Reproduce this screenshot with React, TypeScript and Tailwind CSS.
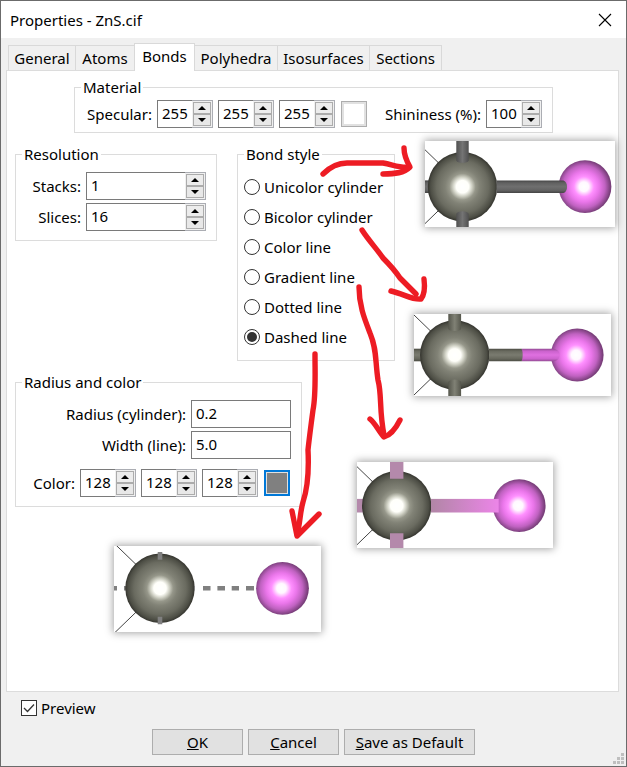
import React, { useState } from 'react';

const tabs = [
  { name: 'General', width: 'w-[67px]' },
  { name: 'Atoms', width: 'w-[59px]' },
  { name: 'Bonds', width: 'w-[61px]' },
  { name: 'Polyhedra', width: 'w-[82px]' },
  { name: 'Isosurfaces', width: 'w-[92px]' },
  { name: 'Sections', width: 'w-[73px]' }
];

const bondStyles = [
  'Unicolor cylinder',
  'Bicolor cylinder',
  'Color line',
  'Gradient line',
  'Dotted line',
  'Dashed line'
];

const arrows = [
  'M323 174 C329 168 337 163 347 163 L383 163 C394 165 400 168 409 167',
  'M404 148 C404 155 406 160 410 167 C404 173 395 174 383 174',
  'M362 230 C369 241 377 249 383 258 C390 265 396 272 400 278 L416 294',
  'M424 279 C425 287 425 294 421 299 C412 300 404 294 391 291',
  'M359 287 C359 306 365 320 370 333 C377 350 375 360 378 380 C382 395 379 410 384 435',
  'M370 419 C376 424 379 432 384 437 C391 435 396 428 400 420',
  'M315 354 C315 376 316 395 313 410 C311 425 309 440 308 450 C309 470 307 490 303 502 C300 512 300 525 297 534',
  'M292 511 L297 536 L319 514'
];

type GroupProps = { title: string; className?: string; children: React.ReactNode };

const Group = ({ title, className = '', children }: GroupProps) => (
  <fieldset className={`border border-[#dcdcdc] ${className}`}>
    <legend className="ml-1.5 px-0.5 leading-[21px]">{title}</legend>
    {children}
  </fieldset>
);

type SpinnerProps = { id?: string; label?: string; value: number; className?: string };

const Spinner = ({ id, label, value, className = 'w-14' }: SpinnerProps) => {
  const [current, setCurrent] = useState(value);
  return (
    <div className={`flex h-7 shrink-0 ${className}`}>
      <input
        id={id}
        aria-label={label}
        inputMode="numeric"
        value={current}
        onChange={(e) => setCurrent(Number(e.target.value) || 0)}
        className="min-w-0 flex-1 border border-r-0 border-[#7a7a7a] bg-white pb-0.5 pl-1 outline-none"
      />
      <div className="flex w-[21px] shrink-0 flex-col border border-l-0 border-[#abadb3] bg-[#f0f0f0] p-px">
        <button
          type="button"
          aria-label="Increase"
          onClick={() => setCurrent(current + 1)}
          className="flex flex-1 items-center justify-center border border-[#acacac] bg-[#ececec]"
        >
          <svg width="8" height="4" viewBox="0 0 8 4"><path d="M4 0 L8 4 H0 Z" /></svg>
        </button>
        <button
          type="button"
          aria-label="Decrease"
          onClick={() => setCurrent(current - 1)}
          className="flex flex-1 items-center justify-center border border-[#acacac] bg-[#e8e8e8]"
        >
          <svg width="8" height="4" viewBox="0 0 8 4"><path d="M0 0 H8 L4 4 Z" /></svg>
        </button>
      </div>
    </div>
  );
};

// Shared gradients for the atoms and bonds of every preview
const Gradients = () => (
  <defs>
    <radialGradient id="zinc">
      <stop offset="0" stopColor="#fff" />
      <stop offset="0.18" stopColor="#fffffa" />
      <stop offset="0.27" stopColor="#d2d3c7" />
      <stop offset="0.38" stopColor="#96978a" />
      <stop offset="0.5" stopColor="#818276" />
      <stop offset="0.75" stopColor="#6a6b60" />
      <stop offset="0.92" stopColor="#4d4e45" />
      <stop offset="1" stopColor="#34342e" />
    </radialGradient>
    <radialGradient id="sulfur" cx="0.48">
      <stop offset="0" stopColor="#fff" />
      <stop offset="0.18" stopColor="#fff8ff" />
      <stop offset="0.38" stopColor="#ff90ff" />
      <stop offset="0.58" stopColor="#ea76ea" />
      <stop offset="0.8" stopColor="#c062c1" />
      <stop offset="1" stopColor="#7a3f7b" />
    </radialGradient>
    <linearGradient id="rod" x2="0" y2="1">
      <stop offset="0" stopColor="#444" />
      <stop offset="0.2" stopColor="#616161" />
      <stop offset="0.5" stopColor="#6f6f6f" />
      <stop offset="0.8" stopColor="#616161" />
      <stop offset="1" stopColor="#444" />
    </linearGradient>
    <linearGradient id="rodUp">
      <stop offset="0" stopColor="#505050" />
      <stop offset="0.5" stopColor="#747474" />
      <stop offset="1" stopColor="#505050" />
    </linearGradient>
    <linearGradient id="zincRod" x2="0" y2="1">
      <stop offset="0" stopColor="#4b4c43" />
      <stop offset="0.2" stopColor="#6a6b60" />
      <stop offset="0.5" stopColor="#7a7b70" />
      <stop offset="0.8" stopColor="#66675c" />
      <stop offset="1" stopColor="#4b4c43" />
    </linearGradient>
    <linearGradient id="zincRodUp">
      <stop offset="0" stopColor="#55564c" />
      <stop offset="0.5" stopColor="#808175" />
      <stop offset="1" stopColor="#55564c" />
    </linearGradient>
    <linearGradient id="sulfurRod" x2="0" y2="1">
      <stop offset="0" stopColor="#914a92" />
      <stop offset="0.2" stopColor="#cb62cd" />
      <stop offset="0.5" stopColor="#df70e0" />
      <stop offset="0.8" stopColor="#cb62cd" />
      <stop offset="1" stopColor="#914a92" />
    </linearGradient>
    <linearGradient id="blend">
      <stop offset="0" stopColor="#b186a6" />
      <stop offset="1" stopColor="#ec85e8" />
    </linearGradient>
  </defs>
);

type PreviewProps = { title: string; className: string; viewBox: string; children: React.ReactNode };

// The zinc atom sits at the origin of each view box
const Preview = ({ title, className, viewBox, children }: PreviewProps) => (
  <svg
    role="img"
    aria-label={title}
    viewBox={viewBox}
    className={`absolute bg-white shadow-[0_0_8px_1px_rgba(0,0,0,0.36)] ${className}`}
  >
    <path d="M-50 -49 L-20 -20 M-50 49 L-20 20" stroke="#444" strokeWidth="1" />
    {children}
  </svg>
);

const Atoms = () => (
  <>
    <circle r="34.7" fill="url(#zinc)" />
    <circle cx="122.5" r="26.4" fill="url(#sulfur)" />
  </>
);

const Illustrations = () => (
  <>
    <Preview title="Unicolor cylinder preview" className="top-[70px] left-[418px] h-[86px] w-[190px]" viewBox="-37.5 -45.7 190 86">
      <rect x="-50" y="-6.3" width="20" height="12.6" fill="url(#rod)" />
      <Atoms />
      <path d="M34 -6.3 H101 Q104.5 -5 104.5 0 T101 6.3 H34 Z" fill="url(#rod)" />
      <path d="M-6.2 -50 H6.2 V-26 Q5 -24 0 -24 T-6.2 -26 Z M-6.2 50 H6.2 V27 Q5 24.5 0 24.5 T-6.2 27 Z" fill="url(#rodUp)" />
    </Preview>
    <Preview title="Bicolor cylinder preview" className="top-[243px] left-[407px] h-[82px] w-[197px]" viewBox="-40.7 -41 197 82">
      <rect x="-50" y="-6.3" width="20" height="12.6" fill="url(#zincRod)" />
      <Atoms />
      <path d="M67 -6.3 H99 Q105 -5 105 0 T99 6.3 H67 Z" fill="url(#sulfurRod)" />
      <path d="M34.3 -6.3 H67 Q69 0 67 6.3 H34.3 Z" fill="url(#zincRod)" />
      <path d="M-6.4 -50 H6.4 V-26 Q5 -24 0 -24 T-6.4 -26 Z M-6.4 50 H6.4 V27 Q5 24.5 0 24.5 T-6.4 27 Z" fill="url(#zincRodUp)" />
    </Preview>
    <Preview title="Gradient line preview" className="top-[391px] left-[350px] h-[86px] w-[196px]" viewBox="-39.7 -43.7 196 86">
      <rect x="-50" y="-6.8" width="20" height="13.6" fill="#b489ab" />
      <Atoms />
      <rect x="34.3" y="-6.8" width="67.7" height="13.6" fill="url(#blend)" />
      <path d="M-6.7 -50 H6.7 V-27 H-6.7 Z M-6.7 50 H6.7 V27.6 H-6.7 Z" fill="#b489ab" />
    </Preview>
    <Preview title="Dashed line preview" className="top-[475px] left-[107px] h-[86px] w-[207px]" viewBox="-46 -42.3 207 86">
      <path d="M-46 0 H-43 M-36 0 H-30" stroke="#808080" strokeWidth="4.6" />
      <Atoms />
      <path d="M34 0 H35 M43 0 H50.5 M57.4 0 H65 M71.7 0 H79 M86 0 H94" stroke="#808080" strokeWidth="4.6" />
      <path d="M0 -36.3 V-28.5 M0 28.5 V36" stroke="#808080" strokeWidth="4.6" />
    </Preview>
    <svg className="pointer-events-none absolute top-0 left-0 h-[620px] w-[611px]" viewBox="7 71 611 620" aria-hidden="true">
      <Gradients />
      <g fill="none" stroke="#ed1c24" strokeWidth="5.4" strokeLinecap="round" strokeLinejoin="round">
        {arrows.map((d) => (
          <path key={d} d={d} />
        ))}
      </g>
    </svg>
  </>
);

const App = () => {
  const [style, setStyle] = useState('Dashed line');

  return (
    <div className="flex min-h-screen flex-col border border-[#6b6b6b] bg-[#f0f0f0] font-['Noto_Sans','Open_Sans',sans-serif] text-[15px] leading-5 whitespace-nowrap text-black">
      <header className="flex h-[37px] shrink-0 items-center justify-between bg-white pr-3.5 pl-[9px]">
        <h1>Properties - ZnS.cif</h1>
        <button type="button" aria-label="Close">
          <svg width="14" height="14" viewBox="0 0 14 14" stroke="#000" strokeWidth="1.1">
            <path d="M1 1 L13 13 M13 1 L1 13" />
          </svg>
        </button>
      </header>

      <nav className="flex items-end px-[7px] pt-[5px]" role="tablist">
        {tabs.map((tab) => (
          <button
            key={tab.name}
            type="button"
            role="tab"
            aria-selected={tab.name === 'Bonds'}
            className={`flex items-center justify-center border border-b-0 border-[#d9d9d9] ${tab.width} ${
              tab.name === 'Bonds'
                ? 'relative z-10 -mb-px h-7 bg-white pb-1'
                : 'h-[25px] border-r-0 pb-px last:border-r nth-4:border-l-0'
            }`}
          >
            {tab.name}
          </button>
        ))}
      </nav>

      <main className="relative mr-[7px] ml-[5px] flex flex-1 flex-col items-start gap-[11px] border border-[#dcdcdc] bg-white pt-1.5 pr-1.5 pl-2">
        <Group title="Material" className="mx-auto w-[479px]">
          <div className="flex items-center justify-end gap-[5px] pt-0.5 pr-2.5 pb-1">
            <label htmlFor="specular">Specular:</label>
            <Spinner id="specular" value={255} />
            <Spinner label="Specular green" value={255} />
            <Spinner label="Specular blue" value={255} />
            <button type="button" aria-label="Specular color" className="ml-px size-[26px] shrink-0 border border-[#adadad] bg-white">
              <span className="block size-full border-2 border-[#e1e1e1]" />
            </button>
            <label htmlFor="shininess" className="w-[109px] text-right">Shininess (%):</label>
            <Spinner id="shininess" value={100} />
          </div>
        </Group>

        <div className="flex items-start gap-5">
          <Group title="Resolution" className="w-[202px]">
            <div className="grid grid-cols-[auto_120px] items-center justify-end gap-x-[5px] gap-y-[3px] pt-[7px] pr-2.5 pb-[9px]">
              <label htmlFor="stacks" className="text-right">Stacks:</label>
              <Spinner id="stacks" value={1} className="w-full" />
              <label htmlFor="slices" className="text-right">Slices:</label>
              <Spinner id="slices" value={16} className="w-full" />
            </div>
          </Group>

          <Group title="Bond style" className="w-[158px]">
            <div className="flex flex-col pt-[7px] pb-2 pl-1.5">
              {bondStyles.map((name) => (
                <label key={name} className="flex h-[30px] items-center gap-1">
                  <input
                    type="radio"
                    name="bond-style"
                    checked={style === name}
                    onChange={() => setStyle(name)}
                    className="grid size-4 shrink-0 appearance-none place-items-center rounded-full border border-[#333] bg-white checked:before:size-2.5 checked:before:rounded-full checked:before:bg-[#333] checked:before:content-['']"
                  />
                  {name}
                </label>
              ))}
            </div>
          </Group>
        </div>

        <Group title="Radius and color" className="w-[287px]">
          <div className="flex flex-col gap-2.5 pt-[7px] pr-2.5 pb-[9px]">
            <div className="grid grid-cols-[auto_100px] items-center justify-end gap-x-[5px] gap-y-[3px]">
              <label htmlFor="radius" className="text-right">Radius (cylinder):</label>
              <input id="radius" defaultValue="0.2" className="h-7 w-full border border-[#7a7a7a] bg-white px-1 pb-0.5" />
              <label htmlFor="width" className="text-right">Width (line):</label>
              <input id="width" defaultValue="5.0" className="h-7 w-full border border-[#7a7a7a] bg-white px-1 pb-0.5" />
            </div>
            <div className="flex items-center justify-end gap-[5px] pr-px">
              <label htmlFor="color">Color:</label>
              <Spinner id="color" value={128} />
              <Spinner label="Color green" value={128} />
              <Spinner label="Color blue" value={128} />
              <button type="button" aria-label="Bond color" className="ml-px size-[26px] shrink-0 border-2 border-[#0078d7] bg-[#808080]">
                <span className="block size-full border border-[#e1e1e1]" />
              </button>
            </div>
          </div>
        </Group>

        <Illustrations />
      </main>

      <footer className="relative flex flex-col gap-[9px] px-5 pt-1 pb-[11px]">
        <label className="flex h-6 items-center gap-1 self-start">
          <span className="grid size-4">
            <input type="checkbox" defaultChecked className="peer size-4 appearance-none border border-[#333] bg-white [grid-area:1/1]" />
            <svg viewBox="0 0 16 16" className="pointer-events-none invisible size-4 [grid-area:1/1] peer-checked:visible" fill="none" stroke="#333" strokeWidth="1.3">
              <path d="M3 8 L6.5 11.5 L13 4.5" />
            </svg>
          </span>
          Preview
        </label>
        <div className="flex h-[26px] justify-center gap-[5px]">
          <button type="button" className="w-[91px] border border-[#adadad] bg-[#e1e1e1]"><u>O</u>K</button>
          <button type="button" className="w-[91px] border border-[#adadad] bg-[#e1e1e1]"><u>C</u>ancel</button>
          <button type="button" className="w-[131px] border border-[#adadad] bg-[#e1e1e1]"><u>S</u>ave as Default</button>
        </div>
        <svg className="absolute right-0.5 bottom-0.5" width="11" height="11" viewBox="0 0 11 11" fill="#bfbfbf" aria-hidden="true">
          <path d="M8 0h3v3h-3z M4 4h3v3h-3z M8 4h3v3h-3z M0 8h3v3h-3z M4 8h3v3h-3z M8 8h3v3h-3z" />
        </svg>
      </footer>
    </div>
  );
};

export default App;
